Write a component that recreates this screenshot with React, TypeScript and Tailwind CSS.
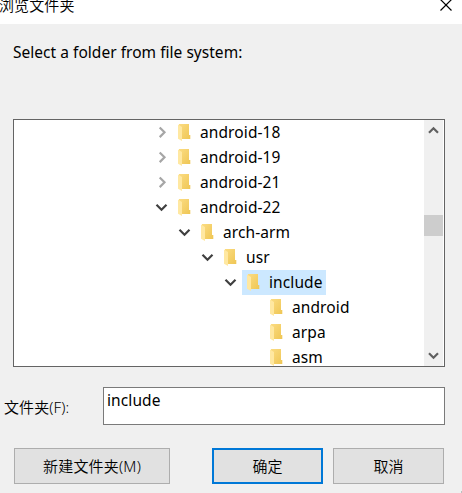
import React from "react";

type Row = { label: string; state?: "open" | "closed"; selected?: boolean; pad: string };

const rows: Row[] = [
  { label: "android-18", state: "closed", pad: "pl-[141px]" },
  { label: "android-19", state: "closed", pad: "pl-[141px]" },
  { label: "android-21", state: "closed", pad: "pl-[141px]" },
  { label: "android-22", state: "open", pad: "pl-[141px]" },
  { label: "arch-arm", state: "open", pad: "pl-[164px]" },
  { label: "usr", state: "open", pad: "pl-[187px]" },
  { label: "include", state: "open", selected: true, pad: "pl-[210px]" },
  { label: "android", pad: "pl-[233px]" },
  { label: "arpa", pad: "pl-[233px]" },
  { label: "asm", pad: "pl-[233px]" },
];

function Folder() {
  return (
    <svg width="13" height="17" viewBox="0 0 13 17" className="shrink-0">
      <defs>
        <linearGradient id="back" x1="0" x2="1" y1="0" y2="1">
          <stop offset="0" stopColor="#fbdc82" />
          <stop offset="1" stopColor="#efc654" />
        </linearGradient>
      </defs>
      <path d="M1 0H11V11H12.3V15H4L1 12Z" fill="url(#back)" />
      <path d="M0 0.5L4 3V17L0 14.7Z" fill="#ffe8a1" />
    </svg>
  );
}

function Arrow({ state }: { state?: "open" | "closed" }) {
  return (
    <svg width="13" height="13" viewBox="0 0 13 13" fill="none" className="shrink-0">
      {state === "open" && <path d="M1.5 3.7L6.5 8.7L11.5 3.7" stroke="#404040" strokeWidth="2.2" />}
      {state === "closed" && <path d="M4.7 1.5L9.5 6.3L4.7 11.1" stroke="#a6a6a6" strokeWidth="2.2" />}
    </svg>
  );
}

function ScrollArrow({ down }: { down?: boolean }) {
  return (
    <svg width="11" height="8" viewBox="0 0 11 8" fill="none">
      <path d={down ? "M1 1.2L5.5 5.7L10 1.2" : "M1 6.8L5.5 2.3L10 6.8"} stroke="#606060" strokeWidth="2.2" />
    </svg>
  );
}

export default function App() {
  return (
    <div className="flex h-[493px] w-[462px] flex-col overflow-hidden bg-[#f0f0f0] font-['Noto_Sans','Noto_Sans_CJK_SC',sans-serif] text-[15px] leading-[20px] text-black">
      <header className="flex h-6 shrink-0 items-start justify-between bg-white">
        <span className="-mt-[5px] -ml-px whitespace-nowrap font-[350] tracking-[0.1px]">浏览文件夹</span>
        <svg width="12" height="12" viewBox="0 0 12 12" className="mr-[10px]">
          <path d="M0.5 -0.5L11.5 10.5M11.5 -0.5L0.5 10.5" stroke="#000" strokeWidth="1.2" />
        </svg>
      </header>
      <p className="mt-[18px] ml-[13px] h-5 shrink-0 whitespace-nowrap text-[15.5px] tracking-[0.03px]">Select a folder from file system:</p>

      <section className="mt-[57px] ml-[13px] flex h-[248px] w-[432px] shrink-0 overflow-hidden border border-[#646464] bg-white">
        <div className="flex-1 overflow-hidden">
          {rows.map((r) => (
            <div key={r.label} className={`flex h-[25px] items-center ${r.pad}`}>
              <Arrow state={r.state} />
              <div className={`ml-[5px] flex h-[25px] items-center pr-[3px] pl-[5px] ${r.selected ? "bg-[#cce8ff]" : ""}`}>
                <Folder />
                <span className="-mt-[2px] ml-[9px] whitespace-nowrap text-[15.5px] tracking-[0.1px]">{r.label}</span>
              </div>
            </div>
          ))}
        </div>
        <div className="mr-px flex w-[19px] flex-col items-center bg-[#f0f0f0] pt-[6px] pb-[6px]">
          <ScrollArrow />
          <div className="mt-[81px] h-[21px] w-full bg-[#cdcdcd]" />
          <div className="flex-1" />
          <ScrollArrow down />
        </div>
      </section>

      <div className="mt-5 flex h-[38px] shrink-0 items-center pl-1">
        <label className="w-[99px] whitespace-nowrap pt-px font-[350] tracking-[0.1px]">文件夹(F):</label>
        <div className="h-[38px] w-[342px] border border-[#7a7a7a] bg-white pt-[2px] pl-[3px] text-[15.5px] tracking-[0.1px]">include</div>
      </div>

      <footer className="mt-[23px] flex h-9 shrink-0 pl-[14px] font-[350]">
        <button className="w-[156px] border border-[#adadad] bg-[#e1e1e1] tracking-[0.2px]">新建文件夹(M)</button>
        <button className="ml-[42px] w-[111px] border-2 border-[#0078d7] bg-[#e1e1e1]">确定</button>
        <button className="ml-[10px] w-[111px] border border-[#adadad] bg-[#e1e1e1]">取消</button>
      </footer>
      <div className="mt-auto ml-auto h-[2px] w-px shrink-0 bg-[#bfbfbf]" />
    </div>
  );
}
